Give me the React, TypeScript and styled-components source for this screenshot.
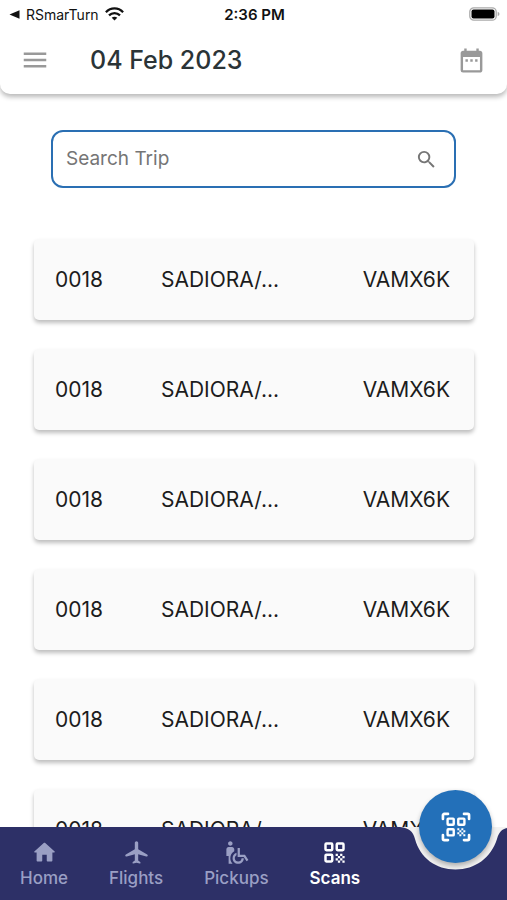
import React from "react";
import styled, { createGlobalStyle } from "styled-components";
import { MdDateRange, MdMenu, MdSearch, MdWheelchairPickup } from "react-icons/md";

const GlobalStyle = createGlobalStyle`
  *, *::before, *::after { box-sizing: border-box; }
  body {
    margin: 0;
    background: #fff;
    color: #1c1c1c;
    font-family: Inter, "Noto Sans", sans-serif;
  }
  button { font-family: inherit; border: 0; padding: 0; background: none; cursor: pointer; }
  svg { display: block; flex: none; }
`;

const Screen = styled.div`
  height: 100vh;
  display: flex;
  flex-direction: column;
  overflow: hidden;
`;

const Header = styled.header`
  flex: none;
  background: #fff;
  border-radius: 0 0 10px 10px;
  box-shadow: 0 3px 5px rgba(0, 0, 0, 0.28);
`;

const StatusBar = styled.div`
  display: grid;
  grid-template-columns: 1fr auto 1fr;
  align-items: center;
  height: 28px;
  padding: 0 7px 0 9px;
  color: #111;
  font-size: 14px;
`;

const BackApp = styled.span`
  display: flex;
  align-items: center;
  gap: 6px;
`;

const Clock = styled.time`
  font-size: 15px;
  font-weight: 600;
`;

const BatterySlot = styled.span`
  justify-self: end;
`;

const TitleBar = styled.div`
  display: flex;
  align-items: center;
  height: 66px;
  padding: 0 21px 2px 20px;
`;

const IconButton = styled.button`
  display: grid;
  place-items: center;
  color: #999;
`;

const Title = styled.h1`
  flex: 1;
  margin: 0 0 0 40px;
  color: #2b3437;
  font-size: 25px;
  font-weight: 500;
  line-height: 32px;
`;

const Content = styled.main`
  flex: 1;
  min-height: 0;
  overflow: hidden;
  padding-top: 36px;
`;

const SearchField = styled.label`
  display: flex;
  align-items: center;
  height: 58px;
  margin: 0 51px;
  padding: 0 16px 0 13px;
  border: 2px solid #2a6fb3;
  border-radius: 12px;
  color: #757575;
`;

const SearchInput = styled.input`
  flex: 1;
  min-width: 0;
  padding: 0;
  border: 0;
  outline: 0;
  background: none;
  color: #1c1c1c;
  font-family: inherit;
  font-size: 19px;
  line-height: 24px;

  &::placeholder { color: #757575; opacity: 1; }
`;

const TripList = styled.ul`
  display: flex;
  flex-direction: column;
  gap: 29px;
  margin: 51px 33px 0 34px;
  padding: 0;
  list-style: none;
`;

const TripCard = styled.li`
  display: grid;
  grid-template-columns: 106px 1fr auto;
  align-items: center;
  height: 81px;
  padding: 0 24px 0 21px;
  border-radius: 5px;
  background: #fafafa;
  box-shadow: 0 3px 4px rgba(0, 0, 0, 0.26);
  font-size: 21px;
  line-height: 28px;
`;

const BottomBar = styled.footer`
  position: relative;
  flex: none;
  height: 73px;
  padding: 12px 100px 0 20px;
  background: #2d3067;
`;

const Tabs = styled.nav`
  display: flex;
  gap: 41px;
`;

const Tab = styled.a<{ $active?: boolean }>`
  display: flex;
  flex-direction: column;
  align-items: center;
  color: ${(p) => (p.$active ? "#fff" : "#9a9fc4")};
  font-size: 17px;
  font-weight: ${(p) => (p.$active ? 600 : 500)};
  line-height: 24px;
  text-decoration: none;
`;

const Notch = styled.svg`
  position: absolute;
  top: 0;
  right: 0;
`;

const ScanButton = styled.button`
  position: absolute;
  top: -37px;
  right: 15px;
  display: grid;
  place-items: center;
  width: 73px;
  height: 73px;
  border-radius: 50%;
  background: #2370b9;
  color: #fff;
  box-shadow: 0 3px 5px rgba(0, 0, 0, 0.28);
`;

const BackArrow = () => (
  <svg width="11" height="9" viewBox="0 0 11 9" fill="currentColor" aria-hidden="true">
    <path d="M10.5.3v8.4L.5 4.5z" />
  </svg>
);

const Wifi = () => (
  <svg width="19" height="14" viewBox="0 0 19 14" fill="none" stroke="currentColor" strokeWidth="2.3" aria-label="Wi-Fi">
    <path d="M.9 5.2C5.8.2 13.2.2 18.1 5.2" />
    <path d="M4 8.4c3.2-3.1 7.8-3.1 11 0" />
    <path d="M9.5 13.6 6.7 10.8c1.6-1.5 4-1.5 5.6 0z" fill="currentColor" stroke="none" />
  </svg>
);

const Battery = () => (
  <svg width="31" height="14" viewBox="0 0 31 14" aria-label="Battery full">
    <rect x=".8" y=".8" width="26.4" height="12.4" rx="4" fill="#fff" stroke="#aaa" strokeWidth="1.3" />
    <rect x="2.5" y="2.5" width="23" height="9" rx="2" fill="#000" />
    <path d="M28.7 4.8q1.8.7 1.8 2.2t-1.8 2.2z" fill="#aaa" />
  </svg>
);

type IconProps = { size: number };

const HomeIcon = ({ size }: IconProps) => (
  <svg width={size} height={size} viewBox="0 0 24 24" fill="currentColor" aria-hidden="true">
    <path d="M10 19v-5h4v5c0 .55.45 1 1 1h3c.55 0 1-.45 1-1v-7h1.7c.46 0 .68-.57.33-.87L12.670 3.600c-.38-.34-.96-.34-1.340 0l-8.360 7.530c-.34.3-.13.87.33.87H5v7c0 .55.45 1 1 1h3c.55 0 1-.45 1-1z" />
  </svg>
);

const FlightIcon = ({ size }: IconProps) => (
  <svg width={size} height={size} viewBox="0 0 24 24" fill="currentColor" aria-hidden="true">
    <path d="M21.480 13.700L13.500 9V3.500c0-.83-.67-1.500-1.500-1.500s-1.500 .67-1.500 1.500V9l-7.980 4.700c-.32 .18-.52 .53-.52 .9 0 .7 .67 1.200 1.340 1.010L10.500 13.500V19l-1.810 1.360c-.12 .09-.19 .24-.19 .4v.59c0 .33 .32 .57 .64 .48L12 21l2.860 .83c.32 .09 .64-.15 .64-.48v-.59c0-.16-.07-.31-.19-.4L13.500 19v-5.500l7.160 2.110c.67 .19 1.340-.31 1.340-1.010 0-.37-.2-.72-.52-.9z" />
  </svg>
);

const QrIcon = ({ size }: IconProps) => (
  <svg width={size} height={size} viewBox="0 0 24 24" fill="currentColor" aria-hidden="true">
    <g fill="none" stroke="currentColor" strokeWidth="2.2">
      <rect x="4" y="4" width="6" height="6" rx=".8" />
      <rect x="14" y="4" width="6" height="6" rx=".8" />
      <rect x="4" y="14" width="6" height="6" rx=".8" />
    </g>
    <path d="M13 13h2v2h-2zM15 15h2v2h-2zM13 17h2v2h-2zM15 19h2v2h-2zM17 17h2v2h-2zM17 13h2v2h-2zM19 15h2v2h-2zM19 19h2v2h-2z" />
  </svg>
);

const ScannerIcon = ({ size }: IconProps) => (
  <svg width={size} height={size} viewBox="0 0 24 24" fill="currentColor" aria-hidden="true">
    <g fill="none" stroke="currentColor">
      <g strokeWidth="1.8">
        <rect x="5.700" y="5.700" width="4.600" height="4.600" rx=".5" />
        <rect x="13.700" y="5.700" width="4.600" height="4.600" rx=".5" />
        <rect x="5.700" y="13.700" width="4.600" height="4.600" rx=".5" />
      </g>
      <path
        d="M2.200 6V3.200a1 1 0 0 1 1-1H6M18 2.200h2.800a1 1 0 0 1 1 1V6M21.800 18v2.800a1 1 0 0 1-1 1H18M6 21.800H3.200a1 1 0 0 1-1-1V18"
        strokeWidth="2"
        strokeLinecap="round"
      />
    </g>
    <path d="M13 13h1.500v1.500H13zM14.500 14.500H16V16h-1.500zM16 13h1.500v1.500H16zM13 16h1.500v1.500H13zM14.500 17.500H16V19h-1.500zM16 16h1.500v1.500H16zM17.500 14.500H19V16h-1.500zM17.500 17.500H19V19h-1.500z" />
  </svg>
);

const trips = Array.from({ length: 6 }, (_, id) => ({
  id,
  number: "0018",
  passenger: "SADIORA/...",
  code: "VAMX6K",
}));

const tabs = [
  { label: "Home", Icon: HomeIcon },
  { label: "Flights", Icon: FlightIcon },
  { label: "Pickups", Icon: MdWheelchairPickup },
  { label: "Scans", Icon: QrIcon, active: true },
];

export default function App() {
  return (
    <Screen>
      <GlobalStyle />
      <Header>
        <StatusBar>
          <BackApp>
            <BackArrow />
            RSmarTurn
            <Wifi />
          </BackApp>
          <Clock>2:36 PM</Clock>
          <BatterySlot>
            <Battery />
          </BatterySlot>
        </StatusBar>
        <TitleBar>
          <IconButton aria-label="Open menu">
            <MdMenu size={30} />
          </IconButton>
          <Title>04 Feb 2023</Title>
          <IconButton aria-label="Choose date">
            <MdDateRange size={29} />
          </IconButton>
        </TitleBar>
      </Header>

      <Content>
        <SearchField>
          <SearchInput type="text" placeholder="Search Trip" aria-label="Search Trip" />
          <MdSearch size={23} />
        </SearchField>
        <TripList>
          {trips.map((trip) => (
            <TripCard key={trip.id}>
              <span>{trip.number}</span>
              <span>{trip.passenger}</span>
              <span>{trip.code}</span>
            </TripCard>
          ))}
        </TripList>
      </Content>

      <BottomBar>
        <Tabs>
          {tabs.map(({ label, Icon, active }) => (
            <Tab key={label} href={"#" + label.toLowerCase()} $active={active} aria-current={active ? "page" : undefined}>
              <Icon size={27} />
              {label}
            </Tab>
          ))}
        </Tabs>
        <Notch width="107" height="44" viewBox="0 0 107 44" aria-hidden="true">
          <path d="M0 0C9 1 13 4 15 12C20 31 36 42.500 55.500 42.500S91 31 97 12C99 5 102 2 107 1V0z" fill="#f2f2f2" />
        </Notch>
        <ScanButton aria-label="Scan code">
          <ScannerIcon size={32} />
        </ScanButton>
      </BottomBar>
    </Screen>
  );
}
